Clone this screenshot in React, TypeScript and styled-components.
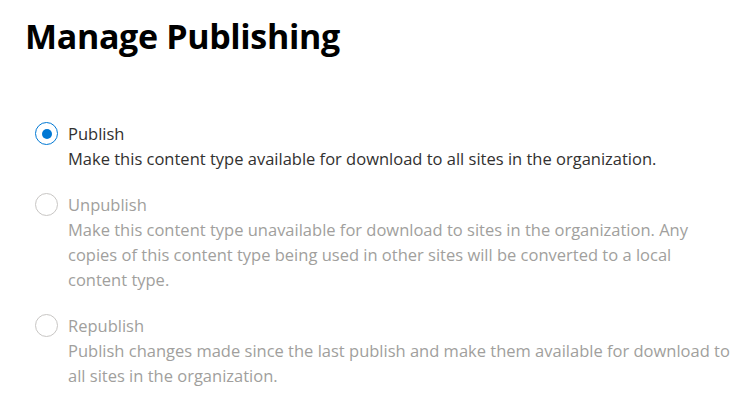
import React, { useState } from 'react';
import styled, { createGlobalStyle } from 'styled-components';

const GlobalStyle = createGlobalStyle`
  html, body {
    margin: 0;
    padding: 0;
    background: #ffffff;
  }
  body {
    font-family: 'Open Sans', 'Noto Sans', sans-serif;
    -webkit-font-smoothing: antialiased;
  }
`;

const Page = styled.div`
  padding: 13px 0 0 25px;
`;

const Title = styled.h1`
  margin: 0;
  font-size: 34px;
  font-weight: 700;
  line-height: 46px;
  color: #000000;
  letter-spacing: -0.35px;
`;

const OptionList = styled.div`
  display: flex;
  flex-direction: column;
  gap: 21px;
  margin-top: 62px;
  padding-left: 10px;
`;

const Option = styled.label<{ $disabled?: boolean }>`
  display: grid;
  grid-template-columns: 22px 1fr;
  column-gap: 11px;
  cursor: ${(p) => (p.$disabled ? 'default' : 'pointer')};
  color: ${(p) => (p.$disabled ? '#a19f9d' : '#323130')};
  font-size: 16.5px;
  line-height: 25px;
`;

const Circle = styled.span<{ $checked?: boolean; $disabled?: boolean }>`
  box-sizing: border-box;
  width: 23px;
  height: 23px;
  margin-top: 1px;
  border-radius: 50%;
  border: 1.5px solid
    ${(p) => (p.$checked ? '#0078d4' : p.$disabled ? '#c8c6c4' : '#605e5c')};
  display: flex;
  align-items: center;
  justify-content: center;

  &::after {
    content: '';
    width: 10px;
    height: 10px;
    border-radius: 50%;
    background: #0078d4;
    display: ${(p) => (p.$checked ? 'block' : 'none')};
  }
`;

const Text = styled.div`
  display: flex;
  flex-direction: column;
`;

const Label = styled.span``;

const Description = styled.span`
  max-width: 664px;
`;

const options = [
  {
    key: 'publish',
    label: 'Publish',
    desc: 'Make this content type available for download to all sites in the organization.',
    disabled: false,
  },
  {
    key: 'unpublish',
    label: 'Unpublish',
    desc: 'Make this content type unavailable for download to sites in the organization. Any copies of this content type being used in other sites will be converted to a local content type.',
    disabled: true,
  },
  {
    key: 'republish',
    label: 'Republish',
    desc: 'Publish changes made since the last publish and make them available for download to all sites in the organization.',
    disabled: true,
  },
];

export default function App() {
  const [selected, setSelected] = useState('publish');

  return (
    <Page>
      <GlobalStyle />
      <Title>Manage Publishing</Title>
      <OptionList>
        {options.map((o) => (
          <Option
            key={o.key}
            $disabled={o.disabled}
            onClick={() => (o.disabled ? null : setSelected(o.key))}
          >
            <Circle $checked={selected === o.key} $disabled={o.disabled} />
            <Text>
              <Label>{o.label}</Label>
              <Description>{o.desc}</Description>
            </Text>
          </Option>
        ))}
      </OptionList>
    </Page>
  );
}
